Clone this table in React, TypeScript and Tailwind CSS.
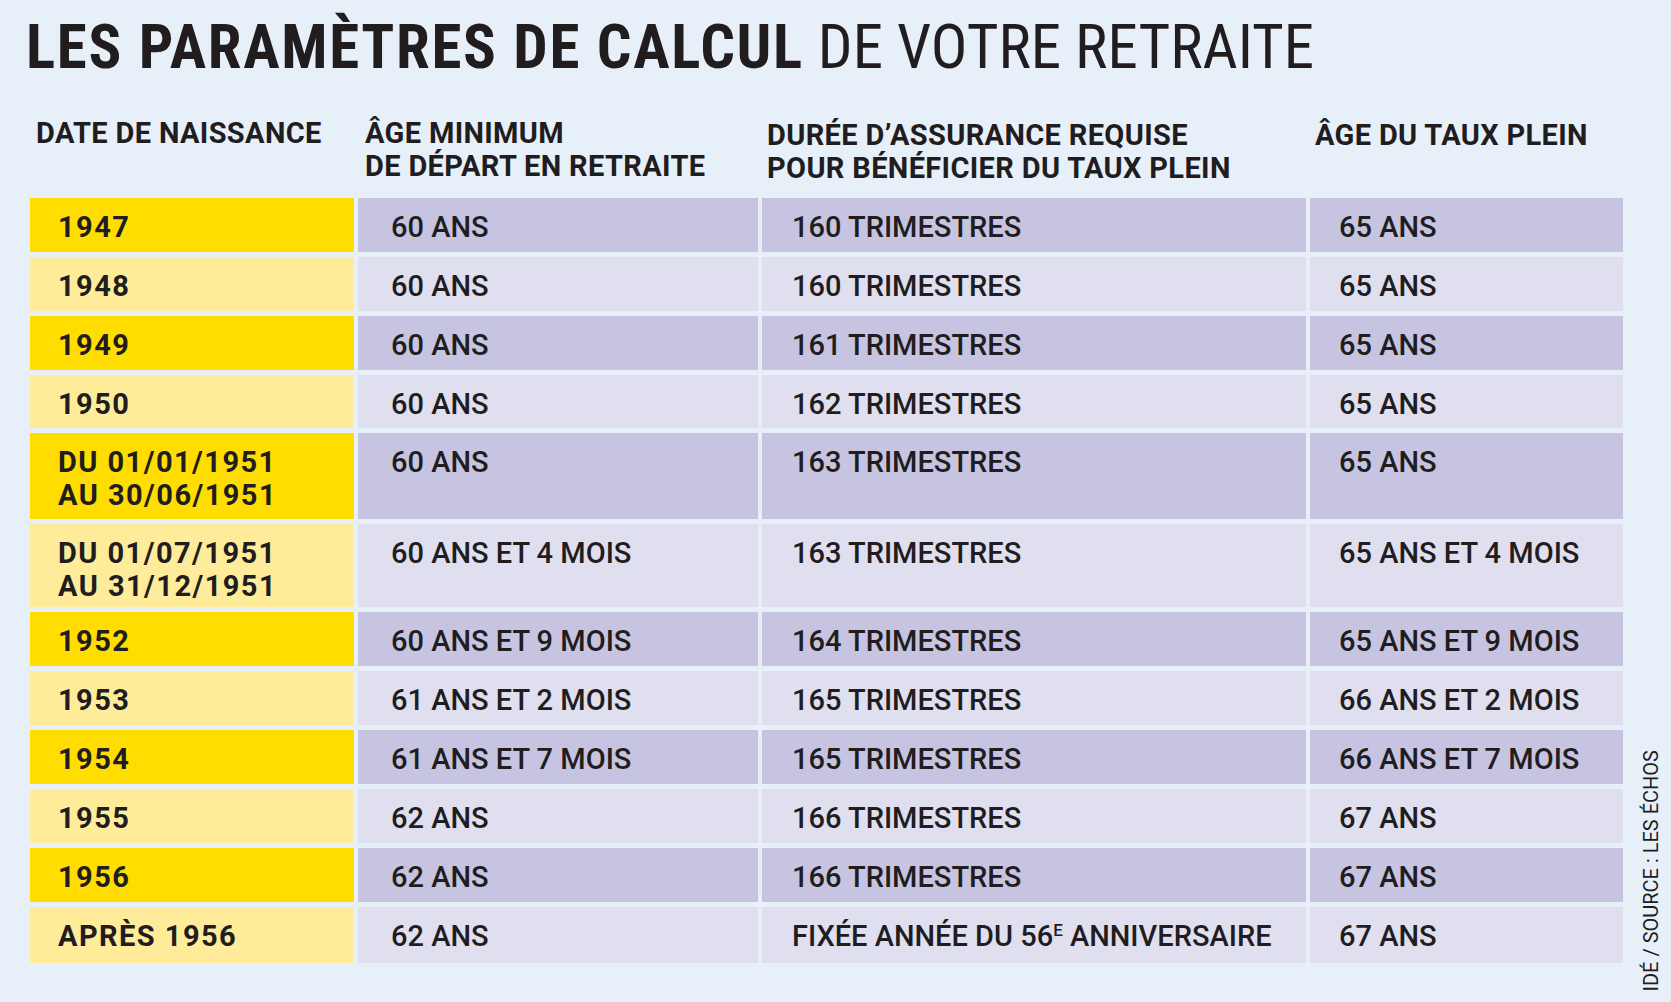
import React from 'react';

type Row = {
  date: string[];
  minAge: string;
  duration: React.ReactNode;
  fullAge: string;
  h: string;
};

const rows: Row[] = [
  { date: ['1947'], minAge: '60 ANS', duration: '160 TRIMESTRES', fullAge: '65 ANS', h: 'h-[54px]' },
  { date: ['1948'], minAge: '60 ANS', duration: '160 TRIMESTRES', fullAge: '65 ANS', h: 'h-[54px]' },
  { date: ['1949'], minAge: '60 ANS', duration: '161 TRIMESTRES', fullAge: '65 ANS', h: 'h-[54px]' },
  { date: ['1950'], minAge: '60 ANS', duration: '162 TRIMESTRES', fullAge: '65 ANS', h: 'h-[53px]' },
  { date: ['DU 01/01/1951', 'AU 30/06/1951'], minAge: '60 ANS', duration: '163 TRIMESTRES', fullAge: '65 ANS', h: 'h-[86px]' },
  { date: ['DU 01/07/1951', 'AU 31/12/1951'], minAge: '60 ANS ET 4 MOIS', duration: '163 TRIMESTRES', fullAge: '65 ANS ET 4 MOIS', h: 'h-[83px]' },
  { date: ['1952'], minAge: '60 ANS ET 9 MOIS', duration: '164 TRIMESTRES', fullAge: '65 ANS ET 9 MOIS', h: 'h-[54px]' },
  { date: ['1953'], minAge: '61 ANS ET 2 MOIS', duration: '165 TRIMESTRES', fullAge: '66 ANS ET 2 MOIS', h: 'h-[54px]' },
  { date: ['1954'], minAge: '61 ANS ET 7 MOIS', duration: '165 TRIMESTRES', fullAge: '66 ANS ET 7 MOIS', h: 'h-[54px]' },
  { date: ['1955'], minAge: '62 ANS', duration: '166 TRIMESTRES', fullAge: '67 ANS', h: 'h-[54px]' },
  { date: ['1956'], minAge: '62 ANS', duration: '166 TRIMESTRES', fullAge: '67 ANS', h: 'h-[54px]' },
  {
    date: ['APRÈS 1956'],
    minAge: '62 ANS',
    duration: (
      <>
        FIXÉE ANNÉE DU 56<span className="relative top-[-10px] text-[17px]">E</span> ANNIVERSAIRE
      </>
    ),
    fullAge: '67 ANS',
    h: 'h-[56px]',
  },
];

const narrow = 'font-["Liberation_Sans_Narrow","Roboto_Condensed","DejaVu_Sans_Condensed","Liberation_Sans",sans-serif]';

export default function App() {
  return (
    <div className="w-full h-[1002px] bg-[#e7eff9] text-[#211d1e] font-['Roboto','Liberation_Sans',sans-serif] overflow-hidden">
      <h1 className={`pl-[26px] pt-[17px] text-[61px] leading-[60px] ${narrow}`}>
        <span className="font-bold tracking-[0.027em]">LES PARAMÈTRES DE CALCUL</span>{' '}
        <span className="font-normal">DE VOTRE RETRAITE</span>
      </h1>

      <div className="flex mt-[40px]">
        <div className="pl-[30px]">
          {/* column titles */}
          <div className="grid grid-cols-[324px_400px_544px_313px] gap-x-[4px] h-[81px] text-[29px] leading-[33px] font-bold tracking-[0.012em]">
            <div className="pl-[6px]">DATE DE NAISSANCE</div>
            <div className="pl-[7px]">
              ÂGE MINIMUM
              <br />
              DE DÉPART EN RETRAITE
            </div>
            <div className="pl-[5px] pt-[2px]">
              DURÉE D’ASSURANCE REQUISE
              <br />
              POUR BÉNÉFICIER DU TAUX PLEIN
            </div>
            <div className="pl-[5px] pt-[2px]">ÂGE DU TAUX PLEIN</div>
          </div>

          {/* table */}
          <div className="flex flex-col gap-y-[5px] text-[29px] leading-[33px]">
            {rows.map((r, i) => {
              const dark = i % 2 === 0;
              return (
                <div key={i} className={`grid grid-cols-[324px_400px_544px_313px] gap-x-[4px] ${r.h}`}>
                  <div className={`pl-[28px] pt-[13px] font-bold tracking-[0.05em] ${dark ? 'bg-[#ffdd00]' : 'bg-[#feec9b]'}`}>
                    {r.date.map((d) => (
                      <div key={d}>{d}</div>
                    ))}
                  </div>
                  <div className={`pl-[33px] pt-[13px] font-medium ${dark ? 'bg-[#c6c4e1]' : 'bg-[#e0dff0]'}`}>{r.minAge}</div>
                  <div className={`pl-[30px] pt-[13px] font-medium ${dark ? 'bg-[#c6c4e1]' : 'bg-[#e0dff0]'}`}>{r.duration}</div>
                  <div className={`pl-[29px] pt-[13px] font-medium ${dark ? 'bg-[#c6c4e1]' : 'bg-[#e0dff0]'}`}>{r.fullAge}</div>
                </div>
              );
            })}
          </div>
        </div>

        {/* credit */}
        <div className="ml-[19px] mt-[633px] text-[20px] leading-[19px] whitespace-nowrap [writing-mode:vertical-rl] rotate-180">
          IDÉ / SOURCE : LES ÉCHOS
        </div>
      </div>
    </div>
  );
}
